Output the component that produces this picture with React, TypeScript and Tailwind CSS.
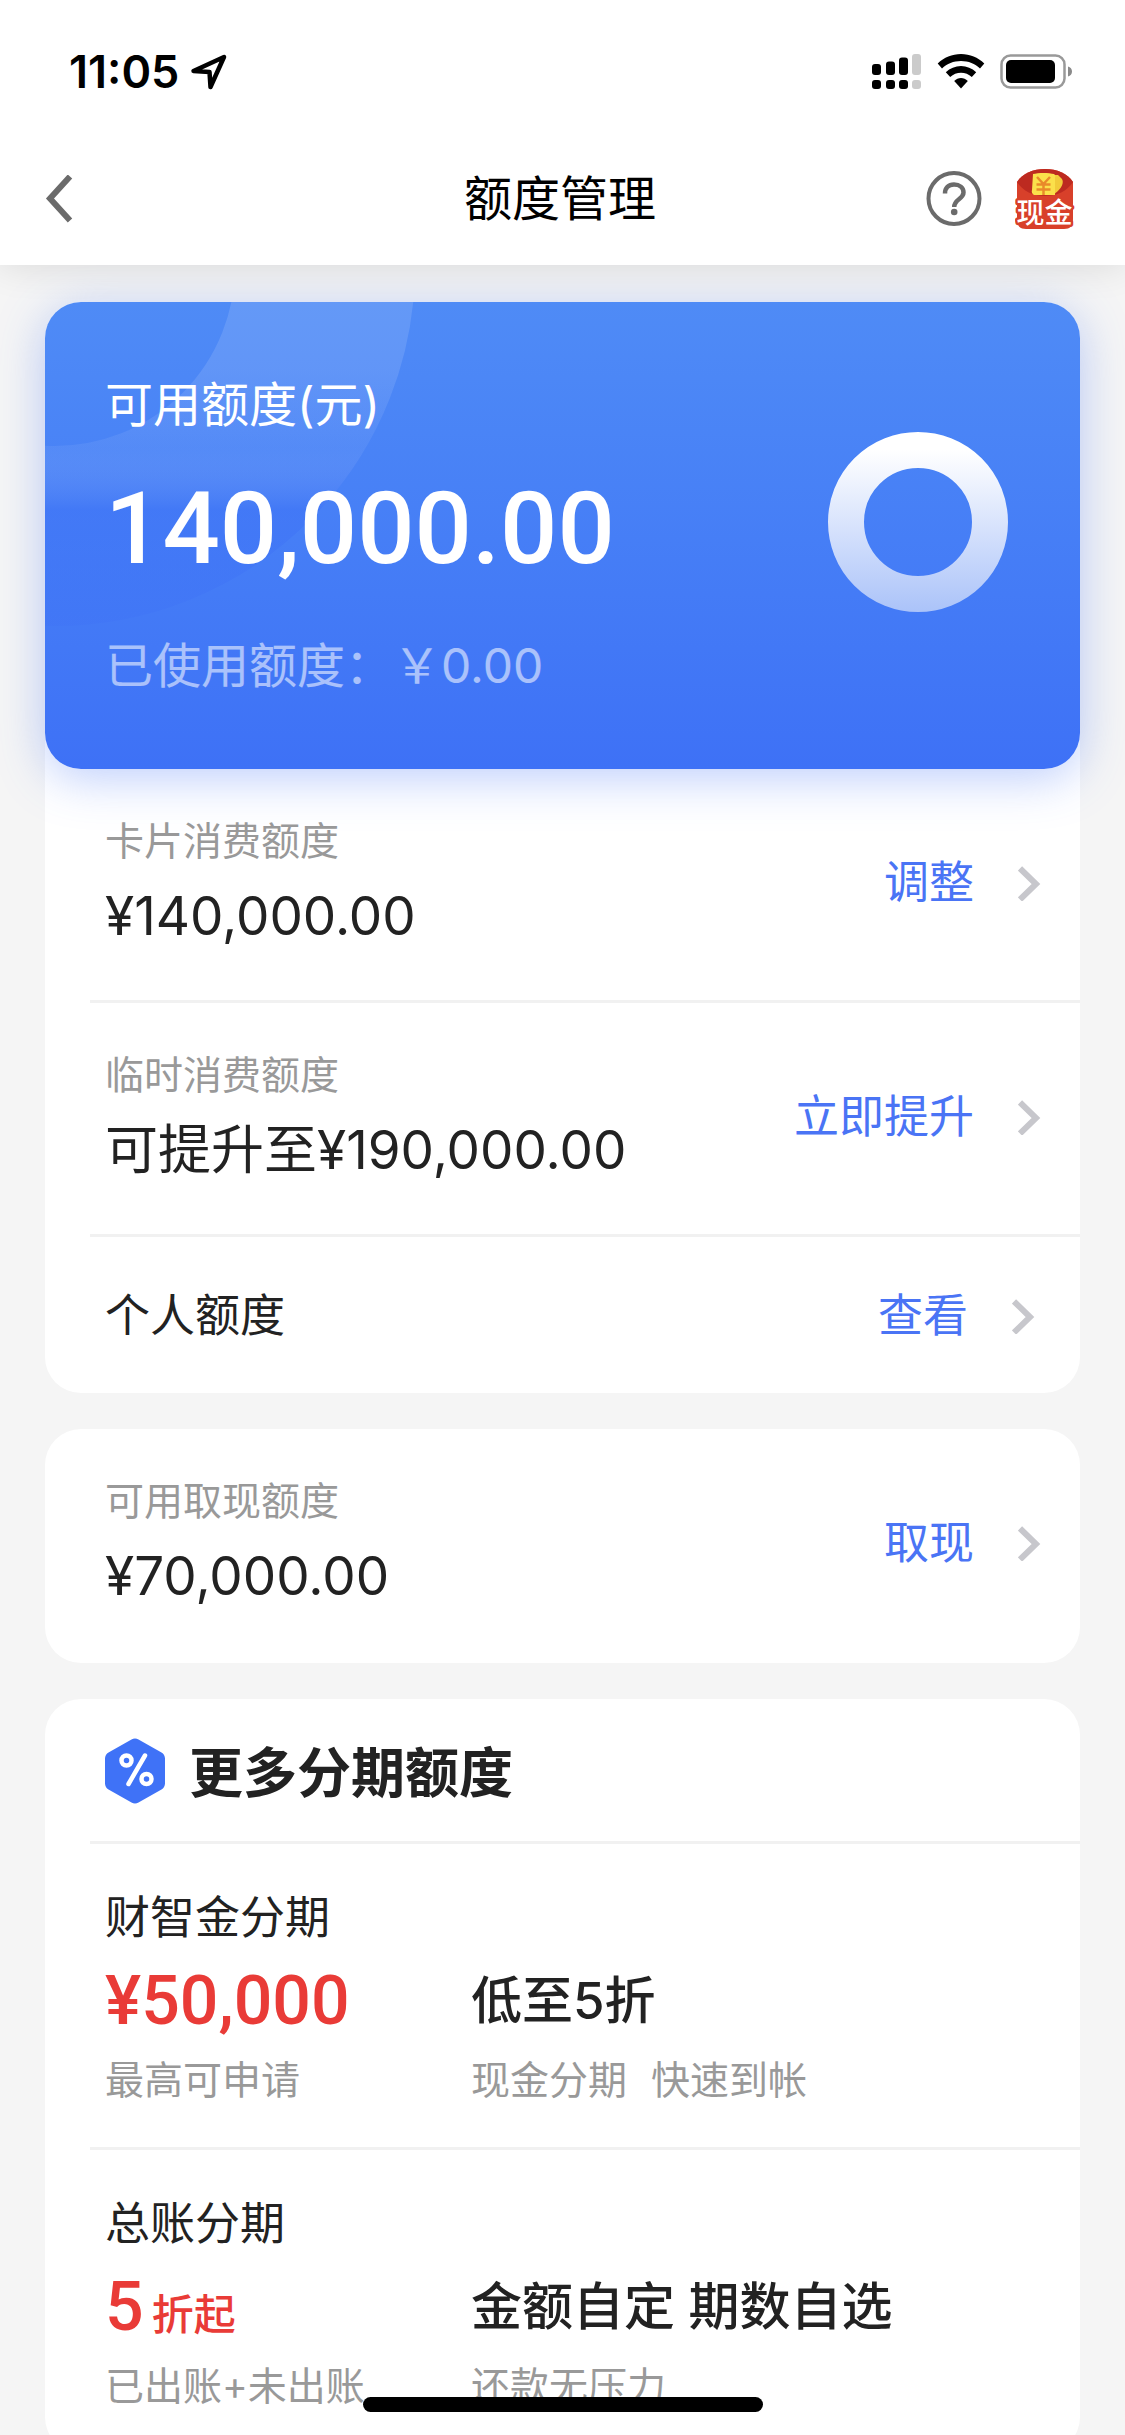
import { type ReactNode } from "react";

type LimitItem = { label?: string; value: string; action: string };

const cardLimits: LimitItem[] = [
  { label: "卡片消费额度", value: "¥140,000.00", action: "调整" },
  { label: "临时消费额度", value: "可提升至¥190,000.00", action: "立即提升" }
];

function LocationIcon() {
  return (
    <svg className="h-9 w-9" viewBox="0 0 36 36" fill="none" stroke="#000" strokeWidth="4.500" strokeLinejoin="round" aria-hidden="true">
      <path d="M2.500 17 33 3 19.500 33 18.500 18Z" />
    </svg>
  );
}

function SignalIcon() {
  return (
    <svg className="h-9 w-[50px]" viewBox="0 0 50 36" aria-hidden="true">
      <rect x="0" y="10" width="9" height="11" rx="3" />
      <rect x="14" y="7.500" width="9" height="13.500" rx="3" />
      <rect x="27" y="3.500" width="9" height="17.500" rx="3" />
      <rect x="40" y="0" width="9" height="21" rx="3" fill="#cbcbcb" />
      <rect x="0" y="26" width="9" height="9" rx="3" />
      <rect x="14" y="26" width="9" height="9" rx="3" />
      <rect x="27" y="26" width="9" height="9" rx="3" />
      <rect x="40" y="26" width="9" height="9" rx="3" fill="#cbcbcb" />
    </svg>
  );
}

function WifiIcon() {
  return (
    <svg className="h-9 w-12" viewBox="0 0 48 36" aria-hidden="true">
      <path d="M24 0C33 0 41 3.500 47.300 9.500L43 14.500C38 9.700 31.500 7 24 7S10 9.700 5 14.500L.7 9.500C7 3.500 15 0 24 0Z" />
      <path d="M24 12C29.700 12 35 14.300 39.200 18.200L34.800 23C31.800 20.300 28 18.800 24 18.800S16.200 20.300 13.200 23L8.800 18.200C13 14.300 18.300 12 24 12Z" />
      <path d="M24 24C26.500 24 28.800 25 30.800 27L24 34.500 17.200 27C19.200 25 21.500 24 24 24Z" />
    </svg>
  );
}

function BatteryIcon() {
  return (
    <svg className="h-9 w-[73px]" viewBox="0 0 73 36" aria-hidden="true">
      <rect x="1.500" y="1.500" width="63" height="32" rx="9" fill="none" stroke="#999" strokeWidth="2.500" />
      <rect x="6" y="6" width="49" height="23" rx="5" />
      <path d="M68 12.500C70.500 13.200 72 15 72 17.500S70.500 21.800 68 22.500Z" fill="#8a8a8a" />
    </svg>
  );
}

function EnvelopeIcon() {
  return (
    <svg className="h-[66px] w-15" viewBox="0 -3 60 66" aria-hidden="true">
      <path d="M2 13C8 4 18 0 30 0S52 4 58 13V50C58 57 55 60 49 60H11C5 60 2 57 2 50Z" fill="#d8402a" />
      <path d="M2 13C8 4 18 0 30 0S52 4 58 13C52 22 42 27 30 27S8 22 2 13Z" fill="#bd2a20" />
      <path d="M38 6H43L47 10C50 15 44 22 38 26H31Z" fill="#f2cb3a" />
      <path d="M18 5C23 3.500 34 3.500 39 5Q41 6 40 9V26H19Q16 24 17 21Z" fill="#fbe04b" />
      <path d="M22 8 28.500 15 35 8M21.500 15.500H35.500M21.500 20.500H35.500M28.500 15V26" fill="none" stroke="#e98a2a" strokeWidth="2.500" />
      <text
        x="29.500"
        y="54"
        textAnchor="middle"
        fontSize="28"
        fontWeight="500"
        fill="#fff"
        stroke="#d8402a"
        strokeWidth="5"
        strokeLinejoin="round"
        paintOrder="stroke"
        fontFamily="'Noto Sans CJK SC', sans-serif"
      >
        现金
      </text>
    </svg>
  );
}

function PercentBadge() {
  return (
    <svg className="h-[66px] w-15" viewBox="0 0 60 66" aria-hidden="true">
      <path
        d="M26.500 1.500C28.600.3 31.400.3 33.500 1.500L56.500 14.500C58.600 15.700 60 18 60 20.500V45.500C60 48 58.600 50.300 56.500 51.500L33.500 64.500C31.400 65.700 28.600 65.700 26.500 64.500L3.500 51.500C1.400 50.300 0 48 0 45.500V20.500C0 18 1.400 15.700 3.500 14.500Z"
        fill="#3f72f7"
      />
      <g fill="none" stroke="#fff" strokeWidth="4.500" strokeLinecap="round">
        <circle cx="21.500" cy="22.500" r="5" />
        <circle cx="41.500" cy="41" r="5" />
        <path d="M40 17.500 23.500 46" />
      </g>
    </svg>
  );
}

function ChevronRight() {
  return (
    <svg className="h-9 w-6" viewBox="0 0 24 36" fill="none" stroke="#c7c7cc" strokeWidth="6" aria-hidden="true">
      <path d="M2 3.500 18 19 2 34.500" />
    </svg>
  );
}

function StatusBar() {
  return (
    <div className="flex h-33 items-center justify-between pt-3 pr-[52px] pl-[69px]">
      <div className="flex items-center gap-3 text-[45px] leading-[60px] font-semibold">
        11:05
        <LocationIcon />
      </div>
      <div className="flex items-center gap-[15px]">
        <SignalIcon />
        <WifiIcon />
        <BatteryIcon />
      </div>
    </div>
  );
}

function NavBar() {
  return (
    <div className="grid h-[133px] grid-cols-[1fr_auto_1fr] items-center pr-[50px] pl-[45px]">
      <button type="button" aria-label="返回" className="justify-self-start">
        <svg className="h-12 w-7" viewBox="0 0 28 48" fill="none" stroke="#6b6b6b" strokeWidth="6" aria-hidden="true">
          <path d="M25 1.500 5 23.500 25 45.500" />
        </svg>
      </button>
      <h1 className="text-[48px] leading-[72px]">额度管理</h1>
      <div className="flex items-center justify-self-end gap-[33px]">
        <button type="button" aria-label="帮助">
          <svg className="h-14 w-14" viewBox="0 0 56 56" fill="none" stroke="#6b6b6b" strokeWidth="4" aria-hidden="true">
            <circle cx="28" cy="27.500" r="25.500" />
            <path d="M19 22.500C19 17 22.500 13.500 28 13.500S37.500 16.700 37.500 21.500C37.500 28 28.200 28 28.200 36" strokeWidth="4.500" />
            <circle cx="28.200" cy="41" r="3.300" fill="#6b6b6b" stroke="none" />
          </svg>
        </button>
        <button type="button" aria-label="现金">
          <EnvelopeIcon />
        </button>
      </div>
    </div>
  );
}

function BalanceCard() {
  return (
    <div className="relative flex items-center justify-between overflow-hidden rounded-[36px] bg-linear-to-b from-[#4f8bf6] to-[#3e71f6] pt-[67px] pr-18 pb-[67px] pl-15 text-white">
      <svg className="absolute top-0 left-0 h-[330px] w-[380px]" viewBox="0 0 380 330" aria-hidden="true">
        <defs>
          <linearGradient id="ring" gradientUnits="userSpaceOnUse" x1="0" y1="0" x2="0" y2="324">
            <stop offset="0" stopColor="#fff" stopOpacity=".12" />
            <stop offset=".2" stopColor="#fff" stopOpacity=".12" />
            <stop offset=".45" stopColor="#b9cffb" stopOpacity=".1" />
            <stop offset=".64" stopColor="#3a6cf6" stopOpacity=".35" />
            <stop offset="1" stopColor="#3e71f6" stopOpacity=".3" />
          </linearGradient>
        </defs>
        <circle cx="10" cy="-36" r="270" fill="none" stroke="url(#ring)" strokeWidth="180" />
      </svg>
      <div className="relative">
        <h2 className="text-[48px] leading-[72px]">可用额度(元)</h2>
        <p className="mt-7 font-['Roboto','Liberation_Sans',sans-serif] text-[101px] leading-[120px] font-medium">140,000.00</p>
        <p className="mt-[41px] text-[48px] leading-[72px] text-white/55">已使用额度：￥0.00</p>
      </div>
      <svg className="mb-7 h-[180px] w-[180px]" viewBox="0 0 180 180" aria-hidden="true">
        <defs>
          <linearGradient id="donut" gradientUnits="userSpaceOnUse" x1="0" y1="0" x2="0" y2="180">
            <stop offset=".1" stopColor="#fff" />
            <stop offset="1" stopColor="#abc3f9" />
          </linearGradient>
        </defs>
        <circle cx="90" cy="90" r="72" fill="none" stroke="url(#donut)" strokeWidth="36" />
      </svg>
    </div>
  );
}

function ActionLink({ children }: { children: ReactNode }) {
  return (
    <a href="#" className="flex items-center gap-11 text-[45px] leading-[66px] text-[#4a74f5]">
      {children}
      <ChevronRight />
    </a>
  );
}

function LimitRow({ item }: { item: LimitItem }) {
  return (
    <div className="flex items-center justify-between pt-[42px] pr-[38px] pb-[45px] pl-15">
      <div>
        <p className="text-[39px] leading-[60px] text-[#999]">{item.label}</p>
        <p className="mt-[6px] text-[53px] leading-[78px] text-[#222]">{item.value}</p>
      </div>
      <ActionLink>{item.action}</ActionLink>
    </div>
  );
}

function Divider() {
  return <div className="ml-[45px] h-[3px] bg-[#f1f1f1]" />;
}

function InstallmentRow({ title, rate, hint, headline, note }: Record<"title" | "hint" | "headline", string> & { rate: ReactNode; note: ReactNode }) {
  return (
    <div className="pt-[41px] pb-[37px] pl-15">
      <h3 className="text-[45px] leading-[66px] text-[#222]">{title}</h3>
      <div className="mt-[5px] flex">
        <div className="w-[366px]">
          <p className="font-['Roboto','Noto_Sans_CJK_SC',sans-serif] text-[68px] leading-[90px] font-medium text-[#e93b37]">{rate}</p>
          <p className="mt-1 text-[39px] leading-[60px] text-[#999]">{hint}</p>
        </div>
        <div>
          <p className="text-[51px] leading-[90px] font-medium text-[#222]">{headline}</p>
          <p className="mt-1 text-[39px] leading-[60px] text-[#999]">{note}</p>
        </div>
      </div>
    </div>
  );
}

export default function App() {
  return (
    <div className="flex h-screen flex-col overflow-hidden bg-[#f5f5f5] font-['Inter','Noto_Sans_CJK_SC',sans-serif] text-black" lang="zh-CN">
      <header className="relative z-10 shrink-0 bg-white shadow-[0_0_36px_rgba(0,0,0,0.12)]">
        <StatusBar />
        <NavBar />
      </header>

      <main className="flex flex-1 flex-col gap-9 overflow-y-auto px-[45px] pt-[37px] [scrollbar-width:none]">
        <section className="shrink-0 rounded-[36px] bg-white">
          <div className="rounded-[36px] shadow-[0_9px_48px_rgba(62,113,246,0.35)]">
            <BalanceCard />
          </div>
          {cardLimits.map((item) => (
            <div key={item.label}>
              <LimitRow item={item} />
              <Divider />
            </div>
          ))}
          <div className="flex items-center justify-between pt-[46px] pr-11 pb-11 pl-15">
            <h3 className="text-[45px] leading-[66px] text-[#222]">个人额度</h3>
            <ActionLink>查看</ActionLink>
          </div>
        </section>

        <section className="shrink-0 rounded-[36px] bg-white pb-[3px]">
          <LimitRow item={{ label: "可用取现额度", value: "¥70,000.00", action: "取现" }} />
        </section>

        <section className="shrink-0 rounded-[36px] bg-white">
          <div className="flex items-start gap-6 pt-[39px] pb-[31px] pl-15">
            <PercentBadge />
            <h2 className="text-[54px] leading-[72px] font-bold text-[#222]">更多分期额度</h2>
          </div>
          <Divider />
          <InstallmentRow
            title="财智金分期"
            rate="¥50,000"
            hint="最高可申请"
            headline="低至5折"
            note={
              <span className="flex gap-6">
                <span>现金分期</span>
                <span>快速到帐</span>
              </span>
            }
          />
          <Divider />
          <InstallmentRow
            title="总账分期"
            rate={
              <span className="flex items-baseline gap-2">
                5<span className="text-[42px] leading-none">折起</span>
              </span>
            }
            hint="已出账+未出账"
            headline="金额自定 期数自选"
            note="还款无压力"
          />
        </section>
      </main>

      <div className="fixed inset-x-0 bottom-[23px] z-20 mx-auto h-[15px] w-[400px] rounded-full bg-black" />
    </div>
  );
}
